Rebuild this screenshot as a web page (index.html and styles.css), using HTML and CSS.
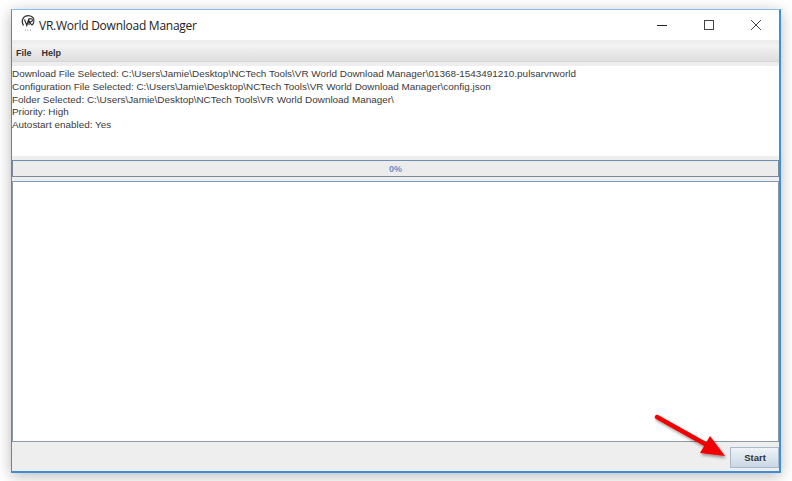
FILE: index.html
```html
<!DOCTYPE html>
<html lang="en">
<head>
<meta charset="utf-8">
<title>VR.World Download Manager</title>
<link rel="stylesheet" href="styles.css">
</head>
<body>
<div class="window">
  <header class="titlebar">
    <svg class="app-icon" viewBox="0 0 16 16" width="16" height="16" aria-hidden="true">
      <path d="M3.5 10.5C1.5 7.5 2 2.5 5.5 1.2 8 .3 11.5.6 13 2.6c1.400 2 .9 5.400-.9 7.600" fill="none" stroke="#333" stroke-width="1.300"/>
      <path d="M4.500 4.500 6.800 10.500 8.600 4.500M9 10V3.800h2.200c1.600 0 1.600 3-.2 3L9.400 6.800l2.500 3.500" fill="none" stroke="#222" stroke-width="1.100"/>
      <path d="M5 15h.8M7.500 15h.8M10 15h.8" stroke="#555" stroke-width=".8"/>
    </svg>
    <span class="title">VR.World Download Manager</span>
    <div class="controls">
      <svg class="ctl" viewBox="0 0 12 12" width="12" height="12" aria-hidden="true"><path d="M1 6.500h10" stroke="#222" stroke-width="1"/></svg>
      <svg class="ctl" viewBox="0 0 12 12" width="12" height="12" aria-hidden="true"><rect x="1.500" y="1.500" width="9" height="9" fill="none" stroke="#444" stroke-width="1"/></svg>
      <svg class="ctl" viewBox="0 0 12 12" width="12" height="12" aria-hidden="true"><path d="M1 1l10 10M11 1 1 11" stroke="#444" stroke-width="1"/></svg>
    </div>
  </header>
  <div class="menu-top"></div>
  <nav class="menubar"><span>File</span><span>Help</span></nav>
  <div class="menu-bottom"></div>
  <section class="log">
    <div>Download File Selected: C:\Users\Jamie\Desktop\NCTech Tools\VR World Download Manager\01368-1543491210.pulsarvrworld</div>
    <div>Configuration File Selected: C:\Users\Jamie\Desktop\NCTech Tools\VR World Download Manager\config.json</div>
    <div>Folder Selected: C:\Users\Jamie\Desktop\NCTech Tools\VR World Download Manager\</div>
    <div>Priority: High</div>
    <div>Autostart enabled: Yes</div>
  </section>
  <div class="progress-wrap"><div class="progress">0%</div></div>
  <div class="list"></div>
  <footer class="actions"><button class="start" type="button">Start</button></footer>
</div>
<svg class="arrow" viewBox="0 0 90 60" width="90" height="60" aria-hidden="true">
  <defs><filter id="s" x="-20%" y="-20%" width="150%" height="150%"><feDropShadow dx="1" dy="2" stdDeviation="1.500" flood-color="#000" flood-opacity=".4"/></filter></defs>
  <g filter="url(#s)"><path d="M6 6 L56 34" stroke="#f00000" stroke-width="4.500" stroke-linecap="round"/><path d="M59 25 L74 45 L49 42 Z" fill="#f00000"/></g>
</svg>
</body>
</html>
```

FILE: styles.css
```css
* { box-sizing: border-box; }
html, body { margin: 0; height: 100%; background: #fff; overflow: hidden; }
body { padding: 9px 11px 0; position: relative; font-family: "Liberation Sans", Arial, sans-serif; }
.window {
  width: 770px; height: 464px;
  display: flex; flex-direction: column;
  border: 1px solid #3f8fd8; border-top-color: #8cc0ee; border-width: 1px 2px 2px 1px;
  background: #eee;
  box-shadow: 0 3px 14px rgba(0,0,0,.28);
}
.titlebar { height: 30px; background: #fff; display: flex; align-items: center; padding-left: 8px; flex: none; }
.app-icon { margin-right: 3px; margin-top: -4px; }
.title { font-size: 12px; color: #222; font-family: "Open Sans", "Liberation Sans", sans-serif; letter-spacing: -.25px; }
.controls { margin-left: auto; display: flex; gap: 35px; padding-right: 17px; }
.menu-top { height: 4px; background: #eeeeee; flex: none; }
.menubar {
  height: 18px; flex: none; display: flex; gap: 10px; align-items: center; padding-left: 4px;
  background: linear-gradient(#f4f4f4, #dedede);
  font-size: 9px; font-weight: bold; color: #333; border-bottom: 1px solid #d6d6d6;
}
.menu-bottom { height: 4px; background: #eeeeee; flex: none; }
.log { height: 90px; flex: none; background: #fff; padding-top: 2px; font-size: 9.920px; line-height: 12.800px; color: #3a3a3a; white-space: nowrap; }
.progress-wrap { flex: none; padding-top: 4px; height: 25px; padding-bottom: 4px; }
.progress {
  height: 17px; border: 1px solid #7a8a9c; border-top-color: #6e8fb4; background: #ececec;
  text-align: center; font-size: 9px; font-weight: bold; line-height: 16px; color: #6f8fc8;
}
.list { flex: none; height: 261px; background: #fff; border: 1px solid #8899aa; border-top-color: #7f9cba; }
.actions { flex: 1; display: flex; justify-content: flex-end; align-items: flex-start; padding-top: 5px; }
.start {
  width: 49px; height: 21px; padding: 0 0 0 1px; border: 1px solid #a9b9c9;
  background: linear-gradient(#eef3f7, #c9d8e6);
  font: bold 9.500px "Liberation Sans", Arial, sans-serif; color: #333;
}
.arrow { position: absolute; left: 651px; top: 411px; }
```
